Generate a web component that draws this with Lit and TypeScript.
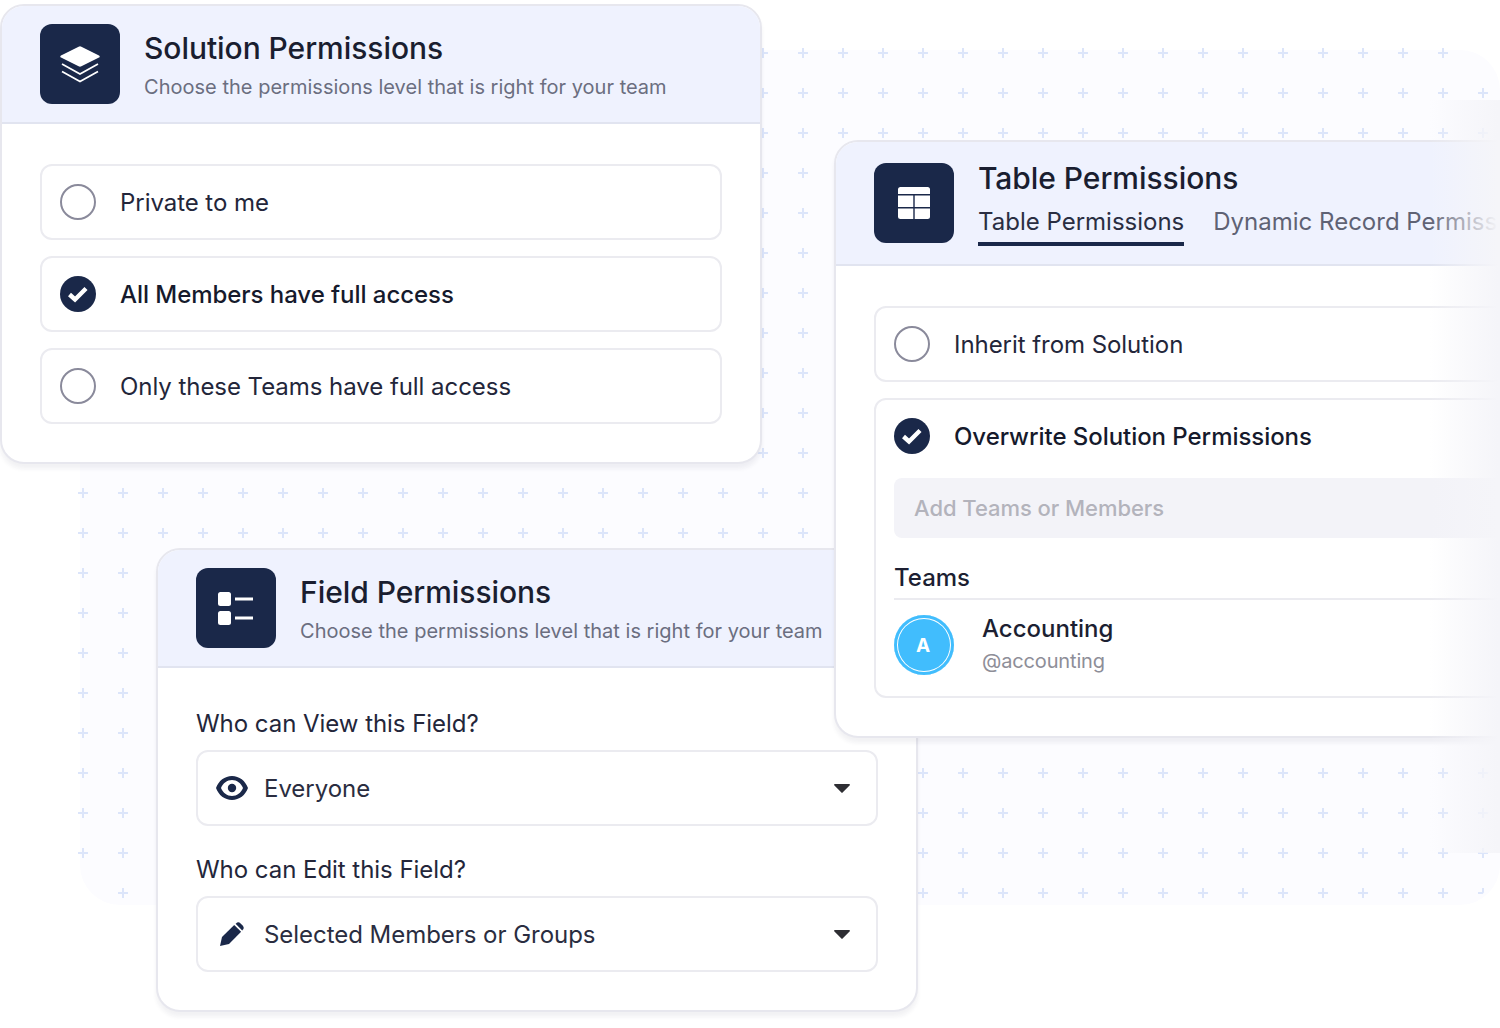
import { LitElement, html, css } from "lit";
import { customElement } from "lit/decorators.js";

const checkIcon = html`<svg class="radio" viewBox="0 0 36 36"><circle cx="18" cy="18" r="18" fill="#1a2849"/><path d="M9.500 18.500l5.500 5L26 12.500" fill="none" stroke="#fff" stroke-width="4.400"/></svg>`;
const radioIcon = html`<svg class="radio" viewBox="0 0 36 36"><circle cx="18" cy="18" r="17" fill="#fff" stroke="#8a8a9b" stroke-width="2"/></svg>`;

const layersIcon = html`<svg viewBox="0 0 80 80"><path d="M38.600 22.700a3 3 0 0 1 2.800 0L59 31.400a1.200 1.200 0 0 1 0 2.200l-17.600 8.700a3 3 0 0 1-2.800 0L21 33.600a1.200 1.200 0 0 1 0-2.200z" fill="#fff"/><path d="M22 40l18 10 18-10M22 47.500l18 10 18-10" fill="none" stroke="#fff" stroke-width="1.800"/></svg>`;
const tableIcon = html`<svg viewBox="0 0 80 80"><rect x="24" y="24" width="32" height="32" rx="2.500" fill="#fff"/><path d="M24 31.700h32M24 44.700h32M40 32v24" fill="none" stroke="#1a2849" stroke-width="1.400"/></svg>`;
const fieldsIcon = html`<svg viewBox="0 0 80 80"><rect x="22" y="24" width="13" height="14" rx="2.500" fill="#fff"/><rect x="22" y="43" width="13" height="14" rx="2.500" fill="#fff"/><path d="M39 31h18M39 50h18" stroke="#fff" stroke-width="3"/></svg>`;
const eyeIcon = html`<svg class="lead" width="32" height="24" viewBox="0 0 32 24"><path fill-rule="evenodd" d="M16 0C8.700 0 2.500 4.900 0 12c2.500 7.100 8.700 12 16 12s13.500-4.900 16-12C29.500 4.900 23.300 0 16 0zm0 4c4.900 0 9 3.200 11 8-2 4.800-6.100 8-11 8S7 16.800 5 12c2-4.800 6.100-8 11-8z" fill="#1a2849"/><circle cx="16" cy="12" r="4.200" fill="#1a2849"/></svg>`;
const pencilIcon = html`<svg class="lead" width="32" height="24" viewBox="0 0 32 24"><g transform="translate(4 0)" fill="#1a2849"><path d="M0 24l2-9L14.200 2.900l6.900 6.900L9 22z"/><path d="M16 1.400a3.300 3.300 0 0 1 4.600 0l2 2a3.300 3.300 0 0 1 0 4.600l-.4.400-6.600-6.600z"/></g></svg>`;
const caretIcon = html`<svg class="caret" width="16" height="9" viewBox="0 0 16 9"><path d="M.8 0h14.400a.8.8 0 0 1 .6 1.300L8.600 8.600a.8.8 0 0 1-1.200 0L.2 1.300A.8.8 0 0 1 .8 0z" fill="#2e2e33"/></svg>`;

@customElement("app-root")
export class AppRoot extends LitElement {
  static styles = css`
    :host {
      display: block;
      position: relative;
      width: 1500px;
      height: 1028px;
      overflow: hidden;
      background: #fff;
      font-family: Inter, "Liberation Sans", sans-serif;
      color: #1a1d30;
    }
    .canvas-bg { position: absolute; left: 0; top: 0; }
    .fade {
      position: absolute;
      left: 1430px;
      top: 100px;
      width: 70px;
      height: 753px;
      background: linear-gradient(90deg, rgba(245,245,249,0) 0%, rgba(245,245,249,.55) 50%, #f5f5f9 97%);
    }
    .card {
      position: absolute;
      width: 762px;
      box-sizing: border-box;
      background: #fff;
      border: 2px solid #e7e7ee;
      border-radius: 24px;
      box-shadow: 0 5px 4px rgba(30,30,70,.06);
      overflow: hidden;
    }
    .solution { left: 0; top: 4px; }
    .table { left: 834px; top: 140px; }
    .field { left: 156px; top: 548px; }
    .head {
      display: flex;
      align-items: center;
      gap: 24px;
      padding: 18px 38px;
      background: #eff2fe;
      border-bottom: 2px solid #e1e4f0;
    }
    .table .head { padding: 21px 38px; white-space: nowrap; }
    .badge {
      flex: none;
      width: 80px;
      height: 80px;
      border-radius: 12px;
      background: #1a2849;
    }
    .badge svg { display: block; width: 80px; height: 80px; }
    .titles { display: flex; flex-direction: column; gap: 5px; padding-top: 4px; }
    .table .titles { gap: 10px; padding-top: 0; margin: -3px 0; }
    h2 {
      margin: 0;
      font-size: 30px;
      line-height: 36px;
      font-weight: 500;
      letter-spacing: -0.05px;
      color: #1a1e30;
    }
    .sub { font-size: 20px; line-height: 32px; color: #6b6e80; white-space: nowrap; letter-spacing: 0.02px; }
    .tabs { display: flex; gap: 29px; font-size: 24px; line-height: 32px; color: #5f6274; }
    .tab { padding-bottom: 4px; border-bottom: 4px solid transparent; }
    .tab.on { color: #2a2e42; border-bottom-color: #1a2849; }
    .body { display: flex; flex-direction: column; gap: 16px; padding: 40px 38px 38px; }
    .row {
      box-sizing: border-box;
      border: 2px solid #ebebf0;
      border-radius: 12px;
      background: #fff;
    }
    .opt {
      display: flex;
      align-items: center;
      gap: 24px;
      height: 72px;
      padding: 0 18px;
      font-size: 24px;
      line-height: 32px;
      letter-spacing: -0.05px;
      color: #23263a;
    }
    .opt span { padding-top: 2px; }
    .opt.on { color: #161a2c; font-weight: 500; }
    .radio { flex: none; display: block; width: 36px; height: 36px; }
    .extra { padding: 6px 18px 21px; display: flex; flex-direction: column; }
    .input {
      height: 60px;
      display: flex;
      align-items: center;
      padding: 0 20px;
      border-radius: 8px;
      background: #f3f3f8;
      color: #b3b3bc;
      font-size: 22px;
      font-weight: 500;
      letter-spacing: -0.05px;
    }
    .teams { margin-top: 24px; font-size: 24px; line-height: 32px; font-weight: 500; color: #1c1f32; padding-bottom: 4px; border-bottom: 2px solid #ebebf0; }
    .member { display: flex; align-items: center; gap: 28px; margin-top: 15px; height: 60px; }
    .avatar {
      flex: none;
      display: flex;
      align-items: center;
      justify-content: center;
      box-sizing: border-box;
      width: 60px;
      height: 60px;
      padding-right: 2px;
      border-radius: 50%;
      background: #41bdfd;
      box-shadow: inset 0 0 0 3px #41bdfd, inset 0 0 0 4px #fff;
      color: #fff;
      font-size: 19px;
      font-weight: 700;
    }
    .who { display: flex; flex-direction: column; }
    .name { font-size: 24px; line-height: 32px; font-weight: 500; color: #1c1f32; }
    .handle { font-size: 20px; line-height: 32px; color: #8e8e98; letter-spacing: -0.15px; }
    .fbody { padding: 40px 38px 38px; display: flex; flex-direction: column; }
    .label { font-size: 24px; line-height: 32px; color: #23263a; margin-bottom: 10px; letter-spacing: -0.04px; }
    .label.second { margin-top: 28px; }
    .select {
      display: flex;
      align-items: center;
      gap: 16px;
      height: 72px;
      padding: 0 26px 0 18px;
      font-size: 24px;
      line-height: 32px;
      letter-spacing: -0.04px;
      color: #2a2d40;
    }
    .lead { flex: none; display: block; }
    .select span { flex: 1; padding-top: 2px; }
    .caret { flex: none; display: block; }
  `;

  private option(label: string, on = false) {
    return html`<div class="row"><div class="opt ${on ? "on" : ""}">${on ? checkIcon : radioIcon}<span>${label}</span></div></div>`;
  }

  private select(icon: unknown, label: string) {
    return html`<div class="row"><div class="select">${icon}<span>${label}</span>${caretIcon}</div></div>`;
  }

  render() {
    return html`
      <svg class="canvas-bg" width="1500" height="1028">
        <defs>
          <pattern id="plus" x="63" y="33" width="40" height="40" patternUnits="userSpaceOnUse">
            <path d="M15 19h10v2H15zM19 15h2v10h-2z" fill="#dce5fa"/>
          </pattern>
        </defs>
        <rect x="80" y="50" width="1420" height="855" rx="40" fill="#fcfcff"/>
        <rect x="78" y="48" width="1417" height="857" rx="40" fill="url(#plus)"/>
      </svg>

      <section class="card field">
        <div class="head">
          <div class="badge">${fieldsIcon}</div>
          <div class="titles">
            <h2>Field Permissions</h2>
            <div class="sub">Choose the permissions level that is right for your team</div>
          </div>
        </div>
        <div class="fbody">
          <div class="label">Who can View this Field?</div>
          ${this.select(eyeIcon, "Everyone")}
          <div class="label second">Who can Edit this Field?</div>
          ${this.select(pencilIcon, "Selected Members or Groups")}
        </div>
      </section>

      <section class="card solution">
        <div class="head">
          <div class="badge">${layersIcon}</div>
          <div class="titles">
            <h2>Solution Permissions</h2>
            <div class="sub">Choose the permissions level that is right for your team</div>
          </div>
        </div>
        <div class="body">
          ${this.option("Private to me")}
          ${this.option("All Members have full access", true)}
          ${this.option("Only these Teams have full access")}
        </div>
      </section>

      <section class="card table">
        <div class="head">
          <div class="badge">${tableIcon}</div>
          <div class="titles">
            <h2>Table Permissions</h2>
            <div class="tabs">
              <div class="tab on">Table Permissions</div>
              <div class="tab">Dynamic Record Permissions</div>
            </div>
          </div>
        </div>
        <div class="body">
          ${this.option("Inherit from Solution")}
          <div class="row expanded">
            <div class="opt on">${checkIcon}<span>Overwrite Solution Permissions</span></div>
            <div class="extra">
              <div class="input">Add Teams or Members</div>
              <div class="teams">Teams</div>
              <div class="member">
                <div class="avatar">A</div>
                <div class="who">
                  <div class="name">Accounting</div>
                  <div class="handle">@accounting</div>
                </div>
              </div>
            </div>
          </div>
        </div>
      </section>

      <div class="fade"></div>
    `;
  }
}
